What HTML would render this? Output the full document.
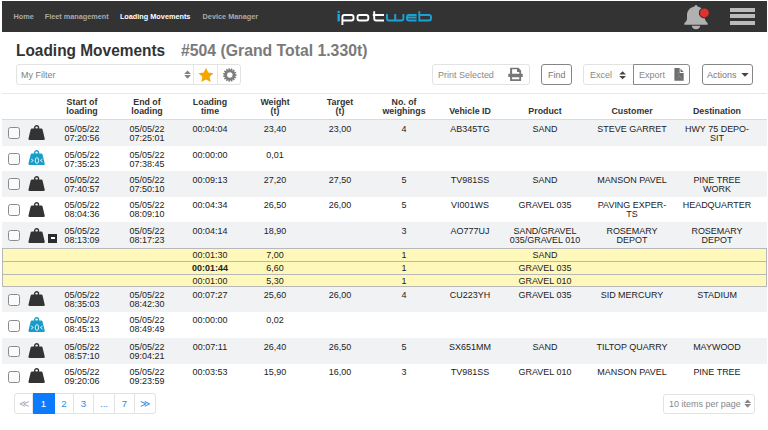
<!DOCTYPE html>
<html><head><meta charset="utf-8">
<style>
html,body{margin:0;padding:0;width:768px;height:430px;overflow:hidden;background:#fff;}
body{position:relative;font-family:"Liberation Sans",sans-serif;color:#222;}
#hdr{position:absolute;left:2px;top:1px;width:765px;height:31px;background:#333;}
.nav{position:absolute;top:11px;font-size:7.3px;font-weight:bold;color:#aaa;white-space:nowrap;line-height:9px;}
.nav.on{color:#fff;}
.title{position:absolute;top:40.5px;font-size:16.5px;font-weight:bold;color:#333;white-space:nowrap;line-height:18px;transform-origin:0 0;}
.title span{color:#7a7a7a;position:absolute;left:164.5px;top:0;font-size:15.7px;}
.box{position:absolute;box-sizing:border-box;border:1px solid #e3e3e3;border-radius:3px;background:#fff;}
.btn{position:absolute;box-sizing:border-box;border:1px solid #858585;border-radius:3px;background:#fff;}
.t9{position:absolute;font-size:9.4px;line-height:10px;color:#888;white-space:nowrap;transform:scaleX(0.957);transform-origin:0 0;}
.tline{position:absolute;left:2px;top:93px;width:765px;height:1px;background:#e8e8e8;}
.hline{position:absolute;left:2px;top:119px;width:765px;height:1px;background:#dadada;}
.row{position:absolute;left:2px;width:765px;background:#fff;}
.row.g{background:#f1f2f4;}
.c{position:absolute;width:80px;text-align:center;font-size:9.4px;line-height:9px;color:#222;white-space:nowrap;transform:scaleX(0.957);transform-origin:50% 0;}
.c.h{font-weight:bold;color:#333;font-size:9.4px;transform:scaleX(0.94);}
.c.bold{font-weight:bold;}
.cb{position:absolute;left:8.3px;width:9.8px;height:9.8px;border:1px solid #8a8a8a;border-radius:2.5px;background:#fbfbfb;}
.ic{position:absolute;left:28.4px;width:18px;height:16px;}
.ic svg{display:block;}
.minus{position:absolute;left:48px;width:9px;height:9px;background:#2b2b2b;}
.minus i{position:absolute;left:2.5px;top:3px;width:4.5px;height:2px;background:#fff;}
.det{position:absolute;left:2px;width:765px;height:39px;box-sizing:border-box;background:#fff8bb;border:1px solid #b8b8b8;}
.detl{position:absolute;left:2px;width:765px;height:1px;background:#b8b8b8;}
.pg{position:absolute;top:393px;height:21px;box-sizing:border-box;border:1px solid #e3e3e3;border-left:none;background:#fff;color:#2a8cea;font-size:9.6px;line-height:19px;text-align:center;}
.pg.first{border-left:1px solid #e3e3e3;border-radius:3px 0 0 3px;color:#aab;}
.pg.last{border-radius:0 3px 3px 0;}
.pg.on{background:#0a7bff;border-color:#0a7bff;color:#fff;}
</style></head>
<body>
<div id="hdr">
  <div class="nav" style="left:11.5px">Home</div>
  <div class="nav" style="left:42.7px">Fleet management</div>
  <div class="nav on" style="left:117.9px">Loading Movements</div>
  <div class="nav" style="left:200.6px">Device Manager</div>
  <svg style="position:absolute;left:330px;top:7px" width="104" height="18" viewBox="332 8 104 18">
    <g fill="#fff">
      <rect x="337.5" y="11" width="2.3" height="1.9" fill="#1ea8de"/>
      <rect x="337.5" y="14" width="2.3" height="7.4" fill="#1ea8de"/>
    </g>
    <g fill="none" stroke="#fff" stroke-width="1.9">
      <path d="M342.4 25 V17 Q342.4 14.95 344.4 14.95 H351.5 Q353.5 14.95 353.5 17 V18.5 Q353.5 20.5 351.5 20.5 H342.4" />
      <rect x="357.5" y="14.95" width="10.8" height="5.55" rx="2" />
      <path d="M374.2 11.2 V18.5 Q374.2 20.5 376.2 20.5 H384 M372.8 14.95 H384" />
    </g>
    <g fill="none" stroke="#1aa2d7" stroke-width="1.9">
      <path d="M387 14 V18.5 Q387 20.5 389 20.5 H401.4 Q403.4 20.5 403.4 18.5 V14 M395.2 14 V20" />
      <path d="M416.6 14.95 H409 Q407 14.95 407 17 V18.5 Q407 20.5 409 20.5 H416.6 M407.5 17.5 H416.6" />
      <path d="M419.3 11.2 V20.5 H429 Q431 20.5 431 18.5 V17 Q431 14.95 429 14.95 H419.3" />
    </g>
  </svg>
  <svg style="position:absolute;left:678px;top:2px" width="32" height="30" viewBox="680 3 32 30">
    <path fill="#b1b1b1" d="M696 5 Q697.5 5 697.5 6.5 C702.5 7.5 705 11 705 15.5 L705 19 Q705.3 21.5 707.7 23.3 L707.7 24.8 L684.3 24.8 L684.3 23.3 Q687 21.5 687 19 L687 15.5 C687 11 689.5 7.5 694.5 6.5 Q694.5 5 696 5 Z M691.8 25.8 H700.2 Q699.8 29.2 696 29.2 Q692.2 29.2 691.8 25.8 Z"/>
    <circle cx="704.4" cy="12.9" r="5.6" fill="#333"/>
    <circle cx="704.4" cy="12.9" r="4.5" fill="#e2302b"/>
  </svg>
  <div style="position:absolute;left:727.6px;top:7px;width:25.3px;height:4.2px;background:#bbb;"></div>
  <div style="position:absolute;left:727.6px;top:13.2px;width:25.3px;height:4.2px;background:#bbb;"></div>
  <div style="position:absolute;left:727.6px;top:20px;width:25.3px;height:4.2px;background:#bbb;"></div>
</div>

<div class="title" style="left:16.2px;transform:scaleX(0.935)">Loading Movements</div>
<div class="title" style="left:180.7px;color:#7a7a7a;transform:scaleX(0.956)">#504 (Grand Total 1.330t)</div>

<!-- filter -->
<div class="box" style="left:15.5px;top:64px;width:225px;height:21px;"></div>
<div style="position:absolute;left:193px;top:65px;width:1px;height:19px;background:#e6e6e6"></div>
<div style="position:absolute;left:217px;top:65px;width:1px;height:19px;background:#e6e6e6"></div>
<div class="t9" style="left:20.6px;top:69.5px;color:#808080">My Filter</div>
<svg style="position:absolute;left:183px;top:70px" width="9" height="10" viewBox="0 0 9 10"><path fill="#808080" d="M4.55 0.4 L7.9 4.1 H1.2 Z M4.55 8.7 L7.9 5.0 H1.2 Z"/></svg>
<svg style="position:absolute;left:196px;top:65px" width="20" height="19" viewBox="196 65 20 19"><path fill="#f5a700" d="M206.00 67.70 L208.23 72.53 L213.51 73.16 L209.61 76.77 L210.64 81.99 L206.00 79.40 L201.36 81.99 L202.39 76.77 L198.49 73.16 L203.77 72.53 Z"/></svg>
<svg style="position:absolute;left:222px;top:66.5px" width="16" height="16" viewBox="0 0 16 16"><path transform="translate(7.8 8)" fill="#7d7d7d" fill-rule="evenodd" d="M4.89 -1.04 L6.77 -0.63 L6.77 0.63 L4.89 1.04 L4.89 1.04 L6.44 2.18 L5.93 3.33 L4.05 2.94 L4.05 2.94 L5.00 4.61 L4.07 5.45 L2.50 4.33 L2.50 4.33 L2.69 6.25 L1.50 6.63 L0.52 4.97 L0.52 4.97 L-0.09 6.80 L-1.33 6.67 L-1.55 4.76 L-1.55 4.76 L-2.84 6.18 L-3.93 5.55 L-3.35 3.72 L-3.35 3.72 L-5.11 4.49 L-5.85 3.47 L-4.57 2.03 L-4.57 2.03 L-6.49 2.02 L-6.75 0.80 L-5.00 0.00 L-5.00 0.00 L-6.75 -0.80 L-6.49 -2.02 L-4.57 -2.03 L-4.57 -2.03 L-5.85 -3.47 L-5.11 -4.49 L-3.35 -3.72 L-3.35 -3.72 L-3.93 -5.55 L-2.84 -6.18 L-1.55 -4.76 L-1.55 -4.76 L-1.33 -6.67 L-0.09 -6.80 L0.52 -4.97 L0.52 -4.97 L1.50 -6.63 L2.69 -6.25 L2.50 -4.33 L2.50 -4.33 L4.07 -5.45 L5.00 -4.61 L4.05 -2.94 L4.05 -2.94 L5.93 -3.33 L6.44 -2.18 L4.89 -1.04 Z M2.75 0 A2.75 2.75 0 1 0 -2.75 0 A2.75 2.75 0 1 0 2.75 0 Z"/></svg>

<!-- print selected -->
<div class="box" style="left:432px;top:64px;width:97.5px;height:21px;"></div>
<div class="t9" style="left:437.5px;top:69.5px">Print Selected</div>
<svg style="position:absolute;left:504px;top:64px" width="24" height="22" viewBox="504 64 24 22"><path fill="#777" fill-rule="evenodd" d="M510.1 67.8 H518.5 L521.1 70.4 V73.7 H522.7 V77 H521.1 V80.9 H510.1 V77 H508.3 V73.7 H510.1 Z M512.1 69.2 H517 V72 H519.3 V73.7 H512.1 Z M512.1 77.3 H519.3 V79.2 H512.1 Z"/></svg>

<div class="btn" style="left:541px;top:64px;width:30.5px;height:21px;"></div>
<div class="t9" style="left:548px;top:69.5px;color:#777">Find</div>

<div class="box" style="left:583px;top:64px;width:50.5px;height:21px;border-radius:3px 0 0 3px"></div>
<div class="t9" style="left:589.6px;top:69.5px">Excel</div>
<svg style="position:absolute;left:619px;top:70.5px" width="8" height="9" viewBox="0 0 8 9"><path fill="#444" d="M3.6 0.3 L7 3.6 H0.2 Z M3.6 8.3 L7 5 H0.2 Z"/></svg>
<div class="btn" style="left:633px;top:64px;width:57px;height:21px;border-radius:0 3px 3px 0;border-color:#8a8a8a"></div>
<div class="t9" style="left:638.9px;top:69.5px">Export</div>
<svg style="position:absolute;left:670px;top:65px" width="18" height="19" viewBox="670 65 18 19"><path fill="#6e6e6e" d="M674.4 68.1 H679.7 V72.9 H683.7 V80.7 H674.4 Z M680.5 68.4 L683.7 72.1 H680.5 Z"/><path d="M677.6 71.8 L679.3 75.8 L677.2 79.3 M679.3 75.8 L682 79.3" stroke="#8c8c8c" stroke-width="0.7" fill="none"/></svg>

<div class="btn" style="left:702px;top:64px;width:51px;height:21px;"></div>
<div class="t9" style="left:707.4px;top:69.5px;color:#777">Actions</div>
<svg style="position:absolute;left:741px;top:73px" width="8" height="4" viewBox="0 0 8 4"><path fill="#444" d="M0.3 0 H7.7 L4 3.8 Z"/></svg>

<!-- table -->
<div class="tline"></div>
<div class="c h" style="left:41.5px;top:96.6px">Start of<br>loading</div>
<div class="c h" style="left:107.0px;top:96.6px">End of<br>loading</div>
<div class="c h" style="left:170.3px;top:96.6px">Loading<br>time</div>
<div class="c h" style="left:235.3px;top:96.6px">Weight<br>(t)</div>
<div class="c h" style="left:300.0px;top:96.6px">Target<br>(t)</div>
<div class="c h" style="left:364.0px;top:96.6px">No. of<br>weighings</div>
<div class="c h" style="left:429.5px;top:105.6px">Vehicle ID</div>
<div class="c h" style="left:504.8px;top:105.6px">Product</div>
<div class="c h" style="left:592.0px;top:105.6px">Customer</div>
<div class="c h" style="left:676.7px;top:105.6px">Destination</div>
<div class="hline"></div>
<div class="row g" style="top:120.0px;height:25.6px"></div>
<div class="cb" style="top:127.2px"></div>
<div class="ic" style="top:125.0px"><svg class="wt" width="18" height="16" viewBox="0 0 18 16"><path fill="#333" d="M4.0 3.6 H13.2 Q14.3 3.6 14.6 4.7 L16.7 13.5 Q17.0 15 15.6 15 H1.6 Q0.2 15 0.5 13.5 L2.6 4.7 Q2.9 3.6 4.0 3.6 Z"/><circle cx="8.6" cy="2.75" r="1.95" fill="none" stroke="#333" stroke-width="1.4"/></svg></div>
<div class="c " style="left:41.5px;top:124.0px">05/05/22<br>07:20:56</div>
<div class="c " style="left:107.0px;top:124.0px">05/05/22<br>07:25:01</div>
<div class="c " style="left:170.3px;top:124.0px">00:04:04</div>
<div class="c " style="left:235.3px;top:124.0px">23,40</div>
<div class="c " style="left:300.0px;top:124.0px">23,00</div>
<div class="c " style="left:364.0px;top:124.0px">4</div>
<div class="c " style="left:429.5px;top:124.0px">AB345TG</div>
<div class="c " style="left:504.8px;top:124.0px">SAND</div>
<div class="c " style="left:592.0px;top:124.0px">STEVE GARRET</div>
<div class="c " style="left:676.7px;top:124.0px">HWY 75 DEPO-<br>SIT</div>
<div class="row " style="top:145.6px;height:25.6px"></div>
<div class="cb" style="top:152.8px"></div>
<div class="ic" style="top:150.0px"><svg class="wt" width="18" height="16" viewBox="0 0 18 16"><path fill="#1a9dc8" d="M4.0 3.6 H13.2 Q14.3 3.6 14.6 4.7 L16.7 13.5 Q17.0 15 15.6 15 H1.6 Q0.2 15 0.5 13.5 L2.6 4.7 Q2.9 3.6 4.0 3.6 Z"/><circle cx="8.6" cy="2.75" r="1.95" fill="none" stroke="#1a9dc8" stroke-width="1.4"/><path d="M3.2 9.0 L5.3 10.5 L3.2 12.0 M14.5 9.0 L12.4 10.5 L14.5 12.0" stroke="#fff" stroke-width="0.85" fill="none"/><ellipse cx="8.95" cy="10.5" rx="1.65" ry="2.9" stroke="#fff" stroke-width="0.85" fill="none"/></svg></div>
<div class="c " style="left:41.5px;top:150.0px">05/05/22<br>07:35:23</div>
<div class="c " style="left:107.0px;top:150.0px">05/05/22<br>07:38:45</div>
<div class="c " style="left:170.3px;top:150.0px">00:00:00</div>
<div class="c " style="left:235.3px;top:150.0px">0,01</div>
<div class="row g" style="top:171.2px;height:25.6px"></div>
<div class="cb" style="top:178.4px"></div>
<div class="ic" style="top:176.0px"><svg class="wt" width="18" height="16" viewBox="0 0 18 16"><path fill="#333" d="M4.0 3.6 H13.2 Q14.3 3.6 14.6 4.7 L16.7 13.5 Q17.0 15 15.6 15 H1.6 Q0.2 15 0.5 13.5 L2.6 4.7 Q2.9 3.6 4.0 3.6 Z"/><circle cx="8.6" cy="2.75" r="1.95" fill="none" stroke="#333" stroke-width="1.4"/></svg></div>
<div class="c " style="left:41.5px;top:175.0px">05/05/22<br>07:40:57</div>
<div class="c " style="left:107.0px;top:175.0px">05/05/22<br>07:50:10</div>
<div class="c " style="left:170.3px;top:175.0px">00:09:13</div>
<div class="c " style="left:235.3px;top:175.0px">27,20</div>
<div class="c " style="left:300.0px;top:175.0px">27,50</div>
<div class="c " style="left:364.0px;top:175.0px">5</div>
<div class="c " style="left:429.5px;top:175.0px">TV981SS</div>
<div class="c " style="left:504.8px;top:175.0px">SAND</div>
<div class="c " style="left:592.0px;top:175.0px">MANSON PAVEL</div>
<div class="c " style="left:676.7px;top:175.0px">PINE TREE<br>WORK</div>
<div class="row " style="top:196.8px;height:25.6px"></div>
<div class="cb" style="top:204.0px"></div>
<div class="ic" style="top:202.0px"><svg class="wt" width="18" height="16" viewBox="0 0 18 16"><path fill="#333" d="M4.0 3.6 H13.2 Q14.3 3.6 14.6 4.7 L16.7 13.5 Q17.0 15 15.6 15 H1.6 Q0.2 15 0.5 13.5 L2.6 4.7 Q2.9 3.6 4.0 3.6 Z"/><circle cx="8.6" cy="2.75" r="1.95" fill="none" stroke="#333" stroke-width="1.4"/></svg></div>
<div class="c " style="left:41.5px;top:200.0px">05/05/22<br>08:04:36</div>
<div class="c " style="left:107.0px;top:200.0px">05/05/22<br>08:09:10</div>
<div class="c " style="left:170.3px;top:200.0px">00:04:34</div>
<div class="c " style="left:235.3px;top:200.0px">26,50</div>
<div class="c " style="left:300.0px;top:200.0px">26,00</div>
<div class="c " style="left:364.0px;top:200.0px">5</div>
<div class="c " style="left:429.5px;top:200.0px">VI001WS</div>
<div class="c " style="left:504.8px;top:200.0px">GRAVEL 035</div>
<div class="c " style="left:592.0px;top:200.0px">PAVING EXPER-<br>TS</div>
<div class="c " style="left:676.7px;top:200.0px">HEADQUARTER</div>
<div class="row g" style="top:222.4px;height:25.6px"></div>
<div class="cb" style="top:229.6px"></div>
<div class="ic" style="top:227.5px"><svg class="wt" width="18" height="16" viewBox="0 0 18 16"><path fill="#333" d="M4.0 3.6 H13.2 Q14.3 3.6 14.6 4.7 L16.7 13.5 Q17.0 15 15.6 15 H1.6 Q0.2 15 0.5 13.5 L2.6 4.7 Q2.9 3.6 4.0 3.6 Z"/><circle cx="8.6" cy="2.75" r="1.95" fill="none" stroke="#333" stroke-width="1.4"/></svg></div>
<div class="minus" style="top:234.2px"><i></i></div>
<div class="c " style="left:41.5px;top:226.0px">05/05/22<br>08:13:09</div>
<div class="c " style="left:107.0px;top:226.0px">05/05/22<br>08:17:23</div>
<div class="c " style="left:170.3px;top:226.0px">00:04:14</div>
<div class="c " style="left:235.3px;top:226.0px">18,90</div>
<div class="c " style="left:364.0px;top:226.0px">3</div>
<div class="c " style="left:429.5px;top:226.0px">AO777UJ</div>
<div class="c " style="left:504.8px;top:226.0px">SAND/GRAVEL<br>035/GRAVEL 010</div>
<div class="c " style="left:592.0px;top:226.0px">ROSEMARY<br>DEPOT</div>
<div class="c " style="left:676.7px;top:226.0px">ROSEMARY<br>DEPOT</div>
<div class="det" style="top:248.0px"></div>
<div class="c " style="left:170.3px;top:250.0px">00:01:30</div>
<div class="c " style="left:235.3px;top:250.0px">7,00</div>
<div class="c " style="left:364.0px;top:250.0px">1</div>
<div class="c " style="left:504.8px;top:250.0px">SAND</div>
<div class="detl" style="top:260.9px"></div>
<div class="c bold" style="left:170.3px;top:262.9px">00:01:44</div>
<div class="c " style="left:235.3px;top:262.9px">6,60</div>
<div class="c " style="left:364.0px;top:262.9px">1</div>
<div class="c " style="left:504.8px;top:262.9px">GRAVEL 035</div>
<div class="detl" style="top:273.8px"></div>
<div class="c " style="left:170.3px;top:275.8px">00:01:00</div>
<div class="c " style="left:235.3px;top:275.8px">5,30</div>
<div class="c " style="left:364.0px;top:275.8px">1</div>
<div class="c " style="left:504.8px;top:275.8px">GRAVEL 010</div>
<div class="row g" style="top:287.2px;height:24.8px"></div>
<div class="cb" style="top:294.4px"></div>
<div class="ic" style="top:291.4px"><svg class="wt" width="18" height="16" viewBox="0 0 18 16"><path fill="#333" d="M4.0 3.6 H13.2 Q14.3 3.6 14.6 4.7 L16.7 13.5 Q17.0 15 15.6 15 H1.6 Q0.2 15 0.5 13.5 L2.6 4.7 Q2.9 3.6 4.0 3.6 Z"/><circle cx="8.6" cy="2.75" r="1.95" fill="none" stroke="#333" stroke-width="1.4"/></svg></div>
<div class="c " style="left:41.5px;top:290.0px">05/05/22<br>08:35:03</div>
<div class="c " style="left:107.0px;top:290.0px">05/05/22<br>08:42:30</div>
<div class="c " style="left:170.3px;top:290.0px">00:07:27</div>
<div class="c " style="left:235.3px;top:290.0px">25,60</div>
<div class="c " style="left:300.0px;top:290.0px">26,00</div>
<div class="c " style="left:364.0px;top:290.0px">4</div>
<div class="c " style="left:429.5px;top:290.0px">CU223YH</div>
<div class="c " style="left:504.8px;top:290.0px">GRAVEL 035</div>
<div class="c " style="left:592.0px;top:290.0px">SID MERCURY</div>
<div class="c " style="left:676.7px;top:290.0px">STADIUM</div>
<div class="row " style="top:312.0px;height:26.0px"></div>
<div class="cb" style="top:320.0px"></div>
<div class="ic" style="top:317.3px"><svg class="wt" width="18" height="16" viewBox="0 0 18 16"><path fill="#1a9dc8" d="M4.0 3.6 H13.2 Q14.3 3.6 14.6 4.7 L16.7 13.5 Q17.0 15 15.6 15 H1.6 Q0.2 15 0.5 13.5 L2.6 4.7 Q2.9 3.6 4.0 3.6 Z"/><circle cx="8.6" cy="2.75" r="1.95" fill="none" stroke="#1a9dc8" stroke-width="1.4"/><path d="M3.2 9.0 L5.3 10.5 L3.2 12.0 M14.5 9.0 L12.4 10.5 L14.5 12.0" stroke="#fff" stroke-width="0.85" fill="none"/><ellipse cx="8.95" cy="10.5" rx="1.65" ry="2.9" stroke="#fff" stroke-width="0.85" fill="none"/></svg></div>
<div class="c " style="left:41.5px;top:315.0px">05/05/22<br>08:45:13</div>
<div class="c " style="left:107.0px;top:315.0px">05/05/22<br>08:49:49</div>
<div class="c " style="left:170.3px;top:315.0px">00:00:00</div>
<div class="c " style="left:235.3px;top:315.0px">0,02</div>
<div class="row g" style="top:338.0px;height:25.8px"></div>
<div class="cb" style="top:345.6px"></div>
<div class="ic" style="top:343.3px"><svg class="wt" width="18" height="16" viewBox="0 0 18 16"><path fill="#333" d="M4.0 3.6 H13.2 Q14.3 3.6 14.6 4.7 L16.7 13.5 Q17.0 15 15.6 15 H1.6 Q0.2 15 0.5 13.5 L2.6 4.7 Q2.9 3.6 4.0 3.6 Z"/><circle cx="8.6" cy="2.75" r="1.95" fill="none" stroke="#333" stroke-width="1.4"/></svg></div>
<div class="c " style="left:41.5px;top:342.0px">05/05/22<br>08:57:10</div>
<div class="c " style="left:107.0px;top:342.0px">05/05/22<br>09:04:21</div>
<div class="c " style="left:170.3px;top:342.0px">00:07:11</div>
<div class="c " style="left:235.3px;top:342.0px">26,40</div>
<div class="c " style="left:300.0px;top:342.0px">26,50</div>
<div class="c " style="left:364.0px;top:342.0px">5</div>
<div class="c " style="left:429.5px;top:342.0px">SX651MM</div>
<div class="c " style="left:504.8px;top:342.0px">SAND</div>
<div class="c " style="left:592.0px;top:342.0px">TILTOP QUARRY</div>
<div class="c " style="left:676.7px;top:342.0px">MAYWOOD</div>
<div class="row " style="top:363.8px;height:25.6px"></div>
<div class="cb" style="top:371.2px"></div>
<div class="ic" style="top:368.2px"><svg class="wt" width="18" height="16" viewBox="0 0 18 16"><path fill="#333" d="M4.0 3.6 H13.2 Q14.3 3.6 14.6 4.7 L16.7 13.5 Q17.0 15 15.6 15 H1.6 Q0.2 15 0.5 13.5 L2.6 4.7 Q2.9 3.6 4.0 3.6 Z"/><circle cx="8.6" cy="2.75" r="1.95" fill="none" stroke="#333" stroke-width="1.4"/></svg></div>
<div class="c " style="left:41.5px;top:367.0px">05/05/22<br>09:20:06</div>
<div class="c " style="left:107.0px;top:367.0px">05/05/22<br>09:23:59</div>
<div class="c " style="left:170.3px;top:367.0px">00:03:53</div>
<div class="c " style="left:235.3px;top:367.0px">15,90</div>
<div class="c " style="left:300.0px;top:367.0px">16,00</div>
<div class="c " style="left:364.0px;top:367.0px">3</div>
<div class="c " style="left:429.5px;top:367.0px">TV981SS</div>
<div class="c " style="left:504.8px;top:367.0px">GRAVEL 010</div>
<div class="c " style="left:592.0px;top:367.0px">MANSON PAVEL</div>
<div class="c " style="left:676.7px;top:367.0px">PINE TREE</div>

<!-- pagination -->
<div class="pg first" style="left:14px;width:19px;">&#x226A;</div>
<div class="pg on" style="left:33px;width:22px;">1</div>
<div class="pg" style="left:55px;width:19px;">2</div>
<div class="pg" style="left:74px;width:20px;">3</div>
<div class="pg" style="left:94px;width:21px;">...</div>
<div class="pg" style="left:115px;width:20px;">7</div>
<div class="pg last" style="left:135px;width:20.5px;">&#x226B;</div>

<div class="box" style="left:663px;top:393.5px;width:92px;height:20px;"></div>
<div class="t9" style="left:668.9px;top:398.5px">10 items per page</div>
<svg style="position:absolute;left:743.5px;top:399px" width="8" height="10" viewBox="0 0 8 10"><path fill="#888" d="M3.6 0.4 L7.1 4.1 H0.3 Z M3.6 8.8 L7.1 5.1 H0.3 Z"/></svg>
</body></html>
